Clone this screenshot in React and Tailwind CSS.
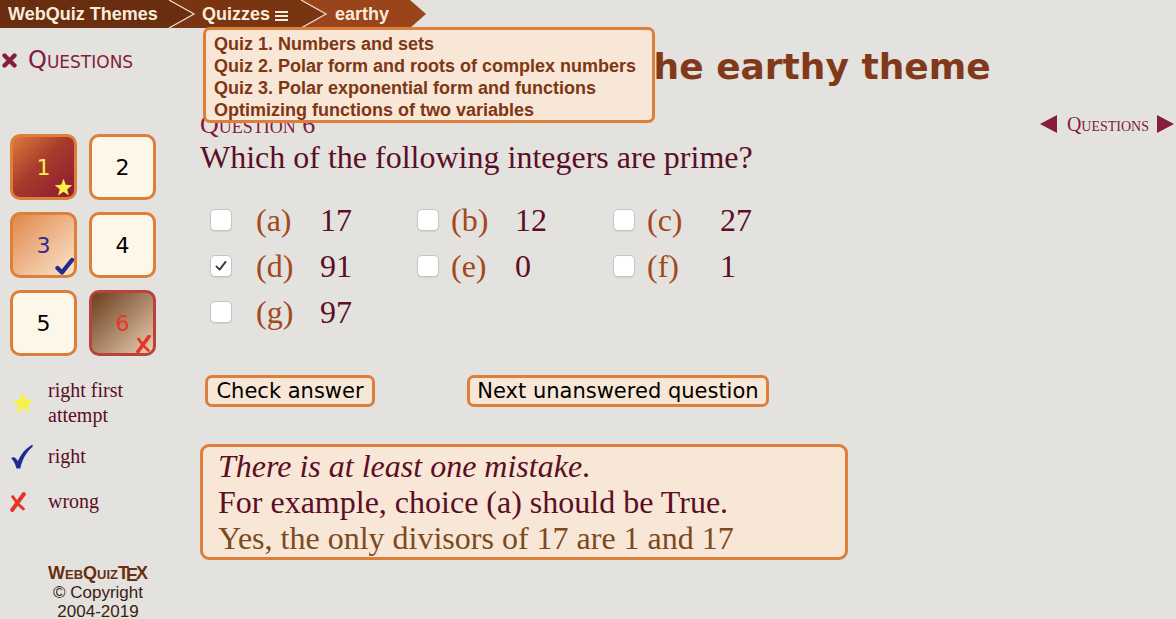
import React from 'react';

const Star = ({ className }) => (
    <svg viewBox="0 0 24 24" className={className}>
        <path d="M12 1 L14.9 8.6 L23 9 L16.7 14.1 L18.8 22 L12 17.5 L5.2 22 L7.3 14.1 L1 9 L9.1 8.6 Z" fill="#f8f04a" />
    </svg>
);

const HeavyCheck = ({ className }) => (
    <svg viewBox="0 0 20 18" className={className}>
        <path d="M3.5 11 L8 15.5 L18 3" fill="none" stroke="#232b8c" strokeWidth="4.4" strokeLinecap="round" strokeLinejoin="round" />
    </svg>
);

const ThinCheck = ({ className }) => (
    <svg viewBox="0 0 22 24" className={className}>
        <path d="M1 13.5 C3.5 11.5 5.5 13 7.5 16.5 C10.5 10 14.5 4.5 21.5 0.5 L21.8 2.5 C15.5 8 12 14.5 9.8 23.5 L6.3 23.5 C5 19.5 3.5 16 1 13.5 Z" fill="#1f2a96" />
    </svg>
);

const RedX = ({ className }) => (
    <svg viewBox="0 0 16 18" className={className}>
        <path d="M14 1.5 L3 16.5" stroke="#e7342a" strokeWidth="3.8" strokeLinecap="round" fill="none" />
        <path d="M3.5 4 C6 8 9 12 13.5 15.5" stroke="#e7342a" strokeWidth="2.8" strokeLinecap="round" fill="none" />
    </svg>
);

const Chevron = ({ from }) => (
    <svg viewBox="0 0 28 28" className="w-[28px] h-[28px] shrink-0">
        <polygon points="0,0 25,14 0,28" fill={from} />
        <polyline points="1,0 26,14 1,28" fill="none" stroke="#eadbcc" strokeWidth="1.3" />
    </svg>
);

const QButton = ({ n, kind }) => {
    if (kind === 'first') {
        return (
            <div className="relative h-[66px] rounded-[10px] border-[3px] border-[#dc7f3a] bg-gradient-to-br from-[#dc7a3b] via-[#a83a2c] via-45% to-[#8c1830] flex items-center justify-center text-[22px] text-[#f6f04e] font-['DejaVu_Sans',sans-serif]">
                {n}
                <Star className="absolute right-[1px] bottom-[0px] w-[19px] h-[19px]" />
            </div>
        );
    }
    if (kind === 'right') {
        return (
            <div className="relative h-[66px] rounded-[10px] border-[3px] border-[#dc7f3a] bg-gradient-to-br from-[#df8848] to-[#f9e4cc] flex items-center justify-center text-[22px] text-[#2b2c8f] font-['DejaVu_Sans',sans-serif]">
                {n}
                <HeavyCheck className="absolute right-[0px] bottom-[0px] w-[20px] h-[18px]" />
            </div>
        );
    }
    if (kind === 'wrong') {
        return (
            <div className="relative h-[66px] rounded-[10px] border-[3px] border-[#b9423a] bg-gradient-to-br from-[#6b3f1e] to-[#ebcfb3] flex items-center justify-center text-[22px] text-[#e8352a] font-['DejaVu_Sans',sans-serif]">
                {n}
                <RedX className="absolute right-[2px] bottom-[0px] w-[16px] h-[18px]" />
            </div>
        );
    }
    return (
        <div className="h-[66px] rounded-[10px] border-[3px] border-[#dc7f3a] bg-[#fdf7ea] flex items-center justify-center text-[22px] text-black font-['DejaVu_Sans',sans-serif]">
            {n}
        </div>
    );
};

const Box = ({ checked }) => (
    <span className="block w-[22px] h-[22px] rounded-[5px] border border-[#c4c4c4] bg-white shadow-[0_1px_1px_rgba(0,0,0,0.08)]">
        {checked && (
            <svg viewBox="0 0 22 22" className="w-full h-full">
                <path d="M6 11.5 L9.5 15 L16 6.5" fill="none" stroke="#333" strokeWidth="2" strokeLinecap="round" strokeLinejoin="round" />
            </svg>
        )}
    </span>
);

const choices = [
    ['a', '17', false], ['b', '12', false], ['c', '27', false],
    ['d', '91', true], ['e', '0', false], ['f', '1', false],
    ['g', '97', false],
];

const App = () => {
    return (
        <div className="relative w-[1176px] h-[619px] overflow-hidden bg-[#e3e2de]">
            {/* breadcrumb */}
            <header className="flex h-[28px] font-['Liberation_Sans',Arial,sans-serif] font-bold text-[18px] text-[#fbecd9]">
                <div className="w-[168px] bg-[#692d10] flex items-center pl-[8px]">WebQuiz Themes</div>
                <div className="w-[132px] bg-[#793412] flex items-center">
                    <Chevron from="#692d10" />
                    <span className="ml-[6px]">Quizzes</span>
                    <svg viewBox="0 0 13 10" className="ml-[5px] mt-[3px] w-[13px] h-[10px]">
                        <rect x="0" y="0" width="13" height="2" fill="#fbecd9" />
                        <rect x="0" y="4" width="13" height="2" fill="#fbecd9" />
                        <rect x="0" y="8" width="13" height="2" fill="#fbecd9" />
                    </svg>
                </div>
                <div className="w-[110px] bg-[#99441a] flex items-center">
                    <Chevron from="#793412" />
                    <span className="ml-[7px]">earthy</span>
                </div>
                <svg viewBox="0 0 16 28" className="w-[16px] h-[28px]">
                    <polygon points="0,0 16,14 0,28" fill="#99441a" />
                </svg>
            </header>

            {/* quizzes menu */}
            <div className="absolute z-10 left-[203px] top-[27px] w-[452px] h-[96px] border-[3px] border-[#dc7f3a] rounded-[7px] bg-[#f8e6d6] pl-[8px] pt-[3px] font-['Liberation_Sans',Arial,sans-serif] font-bold text-[18px] leading-[22px] text-[#7d3714]">
                <div>Quiz 1. Numbers and sets</div>
                <div>Quiz 2. Polar form and roots of complex numbers</div>
                <div>Quiz 3. Polar exponential form and functions</div>
                <div>Optimizing functions of two variables</div>
            </div>

            <div className="flex">
                <aside className="w-[200px] shrink-0">
                    <div className="mt-[20px] h-[24px] flex items-center">
                        <svg viewBox="0 0 15 15" className="ml-[2px] w-[15px] h-[15px]">
                            <path d="M2.5 2.5 L12.5 12.5 M12.5 2.5 L2.5 12.5" stroke="#861c3f" strokeWidth="4.4" strokeLinecap="round" />
                        </svg>
                        <span className="ml-[11px] text-[24px] leading-[24px] text-[#861c3f] font-['DejaVu_Sans',sans-serif] [font-variant-caps:small-caps]">Questions</span>
                    </div>

                    <div className="mt-[62px] ml-[10px] w-[146px] grid grid-cols-[67px_67px] gap-[12px]">
                        <QButton n="1" kind="first" />
                        <QButton n="2" />
                        <QButton n="3" kind="right" />
                        <QButton n="4" />
                        <QButton n="5" />
                        <QButton n="6" kind="wrong" />
                    </div>

                    <div className="font-['Liberation_Serif','Times_New_Roman',serif] text-[20px] leading-[25px] text-[#5b0e26]">
                        <div className="mt-[22px] flex">
                            <div className="w-[48px] flex items-center">
                                <Star className="ml-[11px] w-[24px] h-[24px]" />
                            </div>
                            <div>right first<br />attempt</div>
                        </div>
                        <div className="mt-[16px] flex">
                            <div className="w-[48px] flex items-center">
                                <ThinCheck className="ml-[10px] w-[23px] h-[25px]" />
                            </div>
                            <div>right</div>
                        </div>
                        <div className="mt-[20px] flex">
                            <div className="w-[48px] flex items-center">
                                <RedX className="ml-[9px] w-[17px] h-[22px]" />
                            </div>
                            <div>wrong</div>
                        </div>
                    </div>

                    <div className="mt-[50px] w-[196px] text-center font-['Liberation_Sans',Arial,sans-serif] text-[17px] leading-[19px] text-[#3a2010]">
                        <div className="font-bold text-[18px] text-[#6b2f10] [font-variant-caps:small-caps]">
                            WebQuizT<span className="inline-block ml-[-3px] translate-y-[2px]">E</span><span className="ml-[-2px]">X</span>
                        </div>
                        <div>© Copyright</div>
                        <div>2004-2019</div>
                    </div>
                </aside>

                <main className="flex-1">
                    <h1 className="mt-[17px] pl-[429px] whitespace-nowrap text-[36px] leading-[44px] font-bold text-[#82391a] font-['DejaVu_Sans',sans-serif]">
                        The earthy theme
                    </h1>

                    <div className="mt-[22px] h-[28px] flex items-baseline justify-between pr-[2px] font-['Liberation_Serif','Times_New_Roman',serif] text-[#84193f] [font-variant-caps:small-caps]">
                        <span className="text-[26px] leading-[28px]">Question 6</span>
                        <span className="flex items-center text-[20px] leading-[24px]">
                            <svg viewBox="0 0 17 18" className="w-[17px] h-[18px]">
                                <polygon points="17,0 0,9 17,18" fill="#861c3f" />
                            </svg>
                            <span className="ml-[10px] mr-[8px]">Questions</span>
                            <svg viewBox="0 0 17 18" className="w-[17px] h-[18px]">
                                <polygon points="0,0 17,9 0,18" fill="#861c3f" />
                            </svg>
                        </span>
                    </div>

                    <p className="text-[32px] leading-[36px] text-[#5b0e26] font-['Liberation_Serif','Times_New_Roman',serif]">
                        Which of the following integers are prime?
                    </p>

                    <div className="mt-[22px] grid grid-cols-[56px_64px_97px_34px_64px_98px_34px_73px_60px] auto-rows-[46px] items-center text-[32px] leading-[36px] font-['Liberation_Serif','Times_New_Roman',serif]">
                        {choices.map(([letter, value, checked], i) => (
                            <React.Fragment key={letter}>
                                <div className={i % 3 === 0 ? 'pl-[10px]' : ''}>
                                    <Box checked={checked} />
                                </div>
                                <div className="text-[#a2491c]">({letter})</div>
                                <div className="text-[#5b0e26]">{value}</div>
                            </React.Fragment>
                        ))}
                    </div>

                    <div className="mt-[40px] flex font-['DejaVu_Sans',sans-serif] text-[21px] text-black">
                        <button className="ml-[5px] w-[170px] h-[32px] rounded-[7px] border-[3px] border-[#dc7f3a] bg-[#f8e6d6] leading-none">
                            Check answer
                        </button>
                        <button className="ml-[92px] w-[302px] h-[32px] rounded-[7px] border-[3px] border-[#dc7f3a] bg-[#f8e6d6] leading-none">
                            Next unanswered question
                        </button>
                    </div>

                    <div className="mt-[37px] w-[648px] rounded-[9px] border-[3px] border-[#dc7f3a] bg-[#f8e6d6] pl-[15px] pt-[1px] pb-[1px] text-[32px] leading-[36px] font-['Liberation_Serif','Times_New_Roman',serif]">
                        <div className="text-[#5b0e26]"><em>There is at least one mistake</em>.</div>
                        <div className="text-[#5b0e26]">For example, choice (a) should be True.</div>
                        <div className="text-[#7b4a1e]">Yes, the only divisors of 17 are 1 and 17</div>
                    </div>
                </main>
            </div>
        </div>
    );
};

export default App;
